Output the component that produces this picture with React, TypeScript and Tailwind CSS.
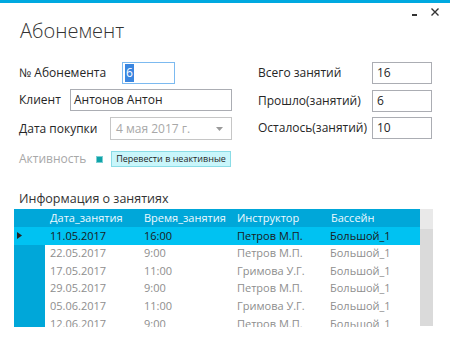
export default function App() {
  const rows = [
    ["11.05.2017", "16:00", "Петров М.П.", "Большой_1"],
    ["22.05.2017", "9:00", "Петров М.П.", "Большой_1"],
    ["17.05.2017", "11:00", "Гримова У.Г.", "Большой_1"],
    ["29.05.2017", "9:00", "Петров М.П.", "Большой_1"],
    ["05.06.2017", "11:00", "Гримова У.Г.", "Большой_1"],
    ["12.06.2017", "9:00", "Петров М.П.", "Большой_1"],
  ];
  return (
    <div className="w-[450px] h-[346px] bg-white overflow-hidden font-['Open_Sans','Noto_Sans',sans-serif] text-[#262626]">
      <div className="h-[3px] bg-[#00a9e0]" />
      <div className="flex justify-between h-[59px]">
        <div className="pl-[20px] pt-[16px] text-[20px] font-light leading-[24px] text-[#333]">Абонемент</div>
        <div className="flex items-start pr-[11px] pt-[5px]">
          <div className="w-[5px] h-[2px] bg-[#333] mt-[6px] mr-[14px]" />
          <svg width="8" height="8" viewBox="0 0 8 8">
            <path d="M0.5 0.5 L7.5 7.5 M7.5 0.5 L0.5 7.5" stroke="#333" strokeWidth="1.4" />
          </svg>
        </div>
      </div>

      <div className="flex pl-[19px] text-[12px]">
        <div className="w-[239px] flex flex-col">
          <div className="flex items-center h-[22px]">
            <div className="w-[103px] whitespace-nowrap">№ Абонемента</div>
            <div className="w-[53px] h-[22px] border border-[#7cbaf0] flex items-center pl-[2px]">
              <span className="bg-[#3a86e0] text-white h-[18px] w-[9px] leading-[18px] text-center">6</span>
            </div>
          </div>
          <div className="flex items-center h-[22px] mt-[5px]">
            <div className="w-[51px] whitespace-nowrap">Клиент</div>
            <div className="w-[162px] h-[22px] border border-[#abadb3] flex items-center pl-[3px] whitespace-nowrap">Антонов Антон</div>
          </div>
          <div className="flex items-center h-[23px] mt-[6px]">
            <div className="w-[91px] whitespace-nowrap">Дата покупки</div>
            <div className="w-[122px] h-[23px] border border-[#c6c6c6] flex items-center pl-[5px] pr-[8px] justify-between text-[#a8a8a8]">
              <span className="whitespace-nowrap">4 мая 2017 г.</span>
              <svg width="7" height="4" viewBox="0 0 7 4">
                <path d="M0 0 L7 0 L3.5 4 Z" fill="#9a9a9a" />
              </svg>
            </div>
          </div>
          <div className="flex items-center h-[16px] mt-[11px]">
            <div className="w-[77px] whitespace-nowrap text-[#a8a8a8]">Активность</div>
            <div className="w-[7px] h-[7px] bg-[#0fa3a8] border border-[#7ccfd3]" />
            <div className="ml-[8px] w-[120px] h-[16px] bg-[#c9f6fb] border border-[#8adce6] flex items-center justify-center text-[9px] whitespace-nowrap leading-[14px]">Перевести в неактивные</div>
          </div>
        </div>
        <div className="flex flex-col">
          <div className="flex items-center h-[22px]">
            <div className="w-[114px] whitespace-nowrap">Всего занятий</div>
            <div className="w-[60px] h-[22px] border border-[#abadb3] flex items-center pl-[4px]">16</div>
          </div>
          <div className="flex items-center h-[22px] mt-[6px]">
            <div className="w-[114px] whitespace-nowrap">Прошло(занятий)</div>
            <div className="w-[60px] h-[22px] border border-[#abadb3] flex items-center pl-[4px]">6</div>
          </div>
          <div className="flex items-center h-[22px] mt-[5px]">
            <div className="w-[114px] whitespace-nowrap">Осталось(занятий)</div>
            <div className="w-[60px] h-[22px] border border-[#abadb3] flex items-center pl-[4px]">10</div>
          </div>
        </div>
      </div>

      <div className="mt-[23px] pl-[19px] h-[18px] leading-[18px] text-[12.5px] text-[#333]">Информация о занятиях</div>

      <div className="mt-[1px] ml-[14px] w-[419px] h-[118px] flex text-[11px]">
        <div className="w-[406px] flex flex-col">
          <div className="h-[18px] bg-[#00a7d9] flex items-center text-[#eefaff] whitespace-nowrap">
            <div className="w-[31px]" />
            <div className="w-[94px] pl-[5px]">Дата_занятия</div>
            <div className="w-[94px] pl-[5px]">Время_занятия</div>
            <div className="w-[93px] pl-[4px]">Инструктор</div>
            <div className="flex-1 pl-[5px]">Бассейн</div>
          </div>
          <div className="h-[100px] overflow-hidden flex flex-col">
            {rows.map((r, i) => {
              const sel = i === 0;
              return (
                <div
                  key={i}
                  className={`h-[17.6px] shrink-0 flex items-center whitespace-nowrap ${sel ? "bg-[#00c2f2] text-[#1a1a1a]" : "bg-white text-[#8e8e8e]"}`}
                >
                  <div className={`w-[31px] h-full flex items-center pl-[3px] ${sel ? "" : "bg-[#00a7d9]"}`}>
                    {sel && (
                      <svg width="5" height="7" viewBox="0 0 5 7">
                        <path d="M0 0 L5 3.5 L0 7 Z" fill="#222" />
                      </svg>
                    )}
                  </div>
                  <div className="w-[94px] pl-[5px]">{r[0]}</div>
                  <div className="w-[94px] pl-[5px]">{r[1]}</div>
                  <div className="w-[93px] pl-[4px]">{r[2]}</div>
                  <div className="flex-1 pl-[4px]">{r[3]}</div>
                </div>
              );
            })}
          </div>
        </div>
        <div className="w-[13px] flex flex-col">
          <div className="h-[20px] bg-[#e9e9e9]" />
          <div className="h-[97px] bg-[#dadada]" />
        </div>
      </div>
    </div>
  );
}
